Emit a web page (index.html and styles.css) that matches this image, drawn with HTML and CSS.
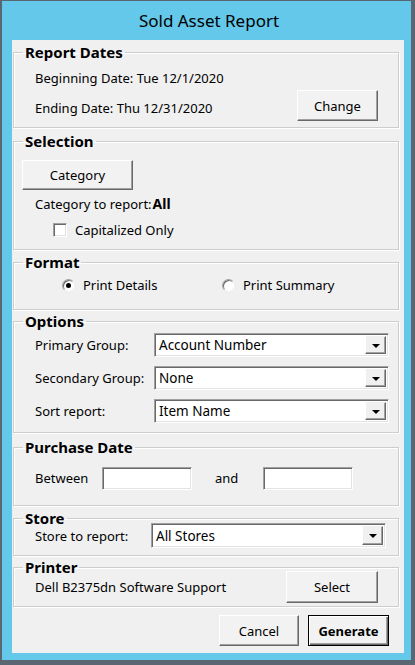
FILE: index.html
```html
<!DOCTYPE html>
<html>
<head>
<meta charset="utf-8">
<link rel="stylesheet" href="styles.css">
</head>
<body>
<div class="window">
  <div class="titlebar">Sold Asset Report</div>
  <div class="client">
    <fieldset class="group g-dates">
      <legend>Report Dates</legend>
      <div class="dates-body">
        <div class="date-lines">
          <div class="line">Beginning Date: Tue 12/1/2020</div>
          <div class="line">Ending Date: Thu 12/31/2020</div>
        </div>
        <button class="btn btn-change">Change</button>
      </div>
    </fieldset>

    <fieldset class="group g-selection">
      <legend>Selection</legend>
      <div class="selection-body">
        <button class="btn btn-category">Category</button>
        <div class="cat-line">Category to report:<span class="bold-all">All</span></div>
        <div class="check-row">
          <span class="checkbox"></span>
          <span>Capitalized Only</span>
        </div>
      </div>
    </fieldset>

    <fieldset class="group g-format">
      <legend>Format</legend>
      <div class="format-body">
        <div class="radio-item r-details">
          <span class="radio"><span class="dot"></span></span>
          <span>Print Details</span>
        </div>
        <div class="radio-item r-summary">
          <span class="radio"></span>
          <span>Print Summary</span>
        </div>
      </div>
    </fieldset>

    <fieldset class="group g-options">
      <legend>Options</legend>
      <div class="options-body">
        <div class="opt-label">Primary Group:</div>
        <div class="select"><span class="select-value">Account Number</span><span class="select-arrow"><span class="tri"></span></span></div>
        <div class="opt-label">Secondary Group:</div>
        <div class="select"><span class="select-value">None</span><span class="select-arrow"><span class="tri"></span></span></div>
        <div class="opt-label">Sort report:</div>
        <div class="select"><span class="select-value">Item Name</span><span class="select-arrow"><span class="tri"></span></span></div>
      </div>
    </fieldset>

    <fieldset class="group g-purchase">
      <legend>Purchase Date</legend>
      <div class="purchase-body">
        <span class="lbl-between">Between</span>
        <span class="textbox"></span>
        <span class="lbl-and">and</span>
        <span class="textbox"></span>
      </div>
    </fieldset>

    <fieldset class="group g-store">
      <legend>Store</legend>
      <div class="store-body">
        <span class="lbl-store">Store to report:</span>
        <div class="select select-store"><span class="select-value">All Stores</span><span class="select-arrow"><span class="tri"></span></span></div>
      </div>
    </fieldset>

    <fieldset class="group g-printer">
      <legend>Printer</legend>
      <div class="printer-body">
        <span class="printer-name">Dell B2375dn Software Support</span>
        <button class="btn btn-select">Select</button>
      </div>
    </fieldset>

    <div class="footer">
      <button class="btn btn-cancel">Cancel</button>
      <button class="btn btn-default">Generate</button>
    </div>
  </div>
</div>
</body>
</html>
```

FILE: styles.css
```css
* { box-sizing: border-box; }

html, body {
  margin: 0;
  padding: 0;
}

body {
  width: 415px;
  height: 665px;
  background: #5a6672;
  font-family: "Noto Sans", "Open Sans", sans-serif;
  font-size: 13px;
  color: #000;
  overflow: hidden;
}

.window {
  margin: 1px 0 0 2px;
  width: 409px;
  height: 659px;
  background: #63c8e9;
  padding: 0 7px 7px 10px;
  display: flex;
  flex-direction: column;
}

.titlebar {
  height: 39px;
  display: flex;
  align-items: center;
  justify-content: center;
  font-size: 17px;
  color: #000;
  padding-left: 2px;
}

.client {
  width: 392px;
  height: 613px;
  background: #f0f0f0;
  padding: 3px 5px 0 1px;
  display: flex;
  flex-direction: column;
}

.group {
  margin: 0;
  padding: 0;
  border: 1px solid #cdcdcd;
  box-shadow: inset 1px 1px 0 #fff, 1px 1px 0 #fff;
  min-width: 0;
}

.group legend {
  margin-left: 9px;
  padding: 0 2px;
  font-weight: bold;
  font-size: 15px;
  line-height: 18px;
}

.g-selection { margin-top: 4px; }
.g-format { margin-top: 3px; }
.g-options { margin-top: 2px; }
.g-purchase { margin-top: 5px; }
.g-store { margin-top: 3px; }
.g-printer { margin-top: 2px; }

/* Buttons */
.btn {
  font-family: inherit;
  font-size: 13px;
  color: #000;
  background: #f2f2f2;
  border: 1px solid;
  border-color: #fff #696969 #696969 #fff;
  box-shadow: inset -1px -1px 0 #a0a0a0;
  padding: 0;
  margin: 0;
}

.btn-change { width: 81px; height: 31px; margin-top: 20px; }
.btn-category { width: 111px; height: 30px; }
.btn-select { width: 92px; height: 32px; }
.btn-cancel { width: 80px; height: 31px; }
.btn-default {
  width: 81px;
  height: 31px;
  font-weight: bold;
  border: 1px solid #000;
  box-shadow: inset 1px 1px 0 #fff, inset -1px -1px 0 #696969, inset -2px -2px 0 #a0a0a0;
}

/* Report dates */
.dates-body {
  display: flex;
  justify-content: space-between;
  align-items: flex-start;
  padding: 9px 20px 6px 21px;
}
.date-lines {
  display: flex;
  flex-direction: column;
  gap: 13px;
}
.line { line-height: 17px; }

/* Selection */
.selection-body {
  display: flex;
  flex-direction: column;
  align-items: flex-start;
  padding: 10px 8px 11px 8px;
}
.cat-line {
  margin-top: 5px;
  margin-left: 13px;
  line-height: 18px;
}
.bold-all {
  font-weight: bold;
  font-size: 14px;
  margin-left: 1px;
}
.check-row {
  margin-top: 9px;
  margin-left: 31px;
  height: 16px;
  display: flex;
  align-items: center;
  gap: 8px;
}
.checkbox {
  width: 14px;
  height: 14px;
  background: #fff;
  border: 1px solid;
  border-color: #a0a0a0 #fff #fff #a0a0a0;
  box-shadow: inset 1px 1px 0 #696969, inset -1px -1px 0 #e3e3e3;
}

/* Format */
.format-body {
  display: flex;
  padding: 6px 0 16px 0;
  height: 38px;
}
.radio-item {
  display: flex;
  align-items: center;
  gap: 8px;
  height: 16px;
}
.r-details { margin-left: 48px; width: 160px; }
.radio {
  width: 13px;
  height: 13px;
  border-radius: 50%;
  background: #fff;
  border: 1px solid;
  border-color: #a0a0a0 #f0f0f0 #f0f0f0 #a0a0a0;
  box-shadow: inset 1px 1px 0 #696969;
  display: flex;
  align-items: center;
  justify-content: center;
}
.dot {
  width: 5px;
  height: 5px;
  border-radius: 50%;
  background: #000;
}

/* Options */
.options-body {
  display: grid;
  grid-template-columns: 119px 235px;
  row-gap: 9px;
  align-items: center;
  padding: 3px 0 9px 21px;
}

.select {
  height: 24px;
  width: 235px;
  background: #fff;
  border: 1px solid;
  border-color: #a0a0a0 #fff #fff #a0a0a0;
  box-shadow: inset 1px 1px 0 #696969, inset -1px -1px 0 #e3e3e3;
  display: flex;
  align-items: stretch;
  padding: 2px;
}
.select-value {
  flex: 1;
  display: flex;
  align-items: center;
  padding-left: 2px;
  font-size: 13.5px;
}
.select-arrow {
  width: 21px;
  background: #f0f0f0;
  border: 1px solid;
  border-color: #f0f0f0 #696969 #696969 #fff;
  box-shadow: inset -1px -1px 0 #a0a0a0;
  display: flex;
  align-items: center;
  justify-content: center;
}
.tri {
  width: 0;
  height: 0;
  border-left: 4px solid transparent;
  border-right: 4px solid transparent;
  border-top: 4px solid #000;
  margin-top: 1px;
}

/* Purchase date */
.purchase-body {
  display: flex;
  align-items: center;
  padding: 11px 0 15px 21px;
}
.textbox {
  width: 90px;
  height: 23px;
  background: #fff;
  border: 1px solid;
  border-color: #a0a0a0 #fff #fff #a0a0a0;
  box-shadow: inset 1px 1px 0 #696969, inset -1px -1px 0 #e3e3e3;
}
.lbl-between { width: 67px; line-height: 16px; margin-top: -2px; }
.lbl-and { width: 71px; padding-left: 23px; line-height: 16px; margin-top: -2px; }

/* Store */
.store-body {
  display: flex;
  align-items: center;
  margin-top: -4px;
  padding: 0 0 7px 21px;
}
.lbl-store { width: 116px; }
.select-store { height: 25px; }

/* Printer */
.printer-body {
  display: flex;
  justify-content: space-between;
  align-items: center;
  margin-top: -5px;
  padding: 0 20px 3px 21px;
}

/* Footer */
.footer {
  display: flex;
  justify-content: flex-end;
  gap: 9px;
  margin-top: 8px;
  padding-right: 10px;
}
```
